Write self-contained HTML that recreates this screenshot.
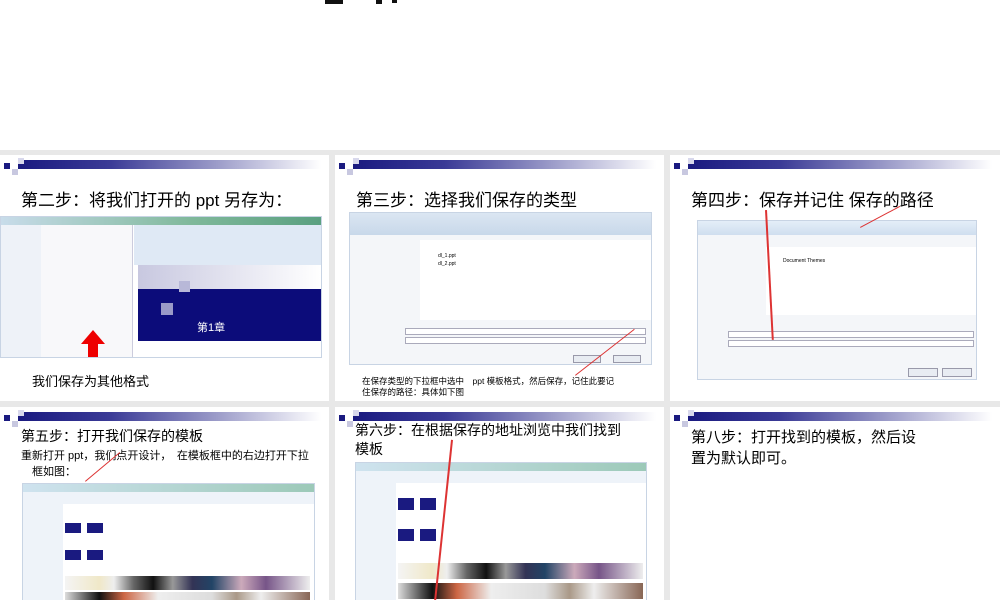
<!DOCTYPE html>
<html><head><meta charset="utf-8"><style>
*{margin:0;padding:0;box-sizing:border-box}
body{width:1000px;height:600px;overflow:hidden;background:#fff;position:relative;font-family:"Liberation Sans","Noto Sans CJK SC",sans-serif;color:#000}
.grid{position:absolute;left:0;top:150px;width:1000px;height:450px;background:#e8e8e8}
.p{position:absolute;background:#fff;overflow:hidden}
.bar{position:absolute;left:18px;top:5px;right:8px;height:9px;background:linear-gradient(90deg,#1a1a80,#3a3a96 30%,#9a9ac8 65%,#fff)}
.sq{position:absolute;width:6px;height:6px}
.t{position:absolute;font-size:17px;white-space:nowrap}
.s{position:absolute;font-size:10px;white-space:nowrap}
.shot{position:absolute;background:#fff;border:1px solid #c8d4e4;overflow:hidden}
.line{position:absolute;background:#d33;transform-origin:0 0;height:2px}
</style></head><body>
<div style="position:absolute;left:325px;top:0;width:18px;height:4px;background:#111"></div>
<div style="position:absolute;left:376px;top:0;width:6px;height:4px;background:#111"></div>
<div style="position:absolute;left:392px;top:0;width:5px;height:3px;background:#111"></div>
<div class="grid">
<!-- panel 1 -->
<div class="p" style="left:0;top:5px;width:329px;height:246px">
<div class="bar"></div><div class="sq" style="left:4px;top:8px;background:#1a1a80"></div><div class="sq" style="left:12px;top:14px;background:#c8c8e0"></div><div class="sq" style="left:18px;top:3px;background:#d8d8ec"></div>
<div class="t" style="left:21px;top:31px">第二步：将我们打开的 ppt 另存为：</div>
<div class="shot" style="left:0;top:61px;width:322px;height:142px">
<div style="position:absolute;left:0;top:0;right:0;height:8px;background:linear-gradient(90deg,#c8dcea,#7fb89a 60%,#5aa080)"></div>
<div style="position:absolute;left:0;top:8px;width:40px;bottom:0;background:#eef2f8"></div>
<div style="position:absolute;left:40px;top:8px;width:92px;bottom:0;background:#f8f8fa;border-right:1px solid #ccd"></div>
<div style="position:absolute;left:133px;top:8px;right:0;height:40px;background:#dfe9f5"></div>
<div style="position:absolute;left:137px;top:72px;right:0;height:52px;background:#0c0c7a"></div>
<div style="position:absolute;left:137px;top:48px;right:0;height:24px;background:linear-gradient(90deg,#c8c8e0,#fff)"></div>
<div style="position:absolute;left:137px;top:89px;width:12px;height:12px;background:#0c0c7a"></div>
<div style="position:absolute;left:178px;top:64px;width:11px;height:11px;background:#b8b8d8"></div>
<div style="position:absolute;left:160px;top:86px;width:12px;height:12px;background:#9a9ac8"></div>
<div style="position:absolute;left:196px;top:102px;color:#fff;font-size:11px">第1章</div>
<div style="position:absolute;left:80px;top:113px;width:0;height:0;border-left:12px solid transparent;border-right:12px solid transparent;border-bottom:14px solid #e00"></div>
<div style="position:absolute;left:87px;top:126px;width:10px;height:16px;background:#e00"></div>
</div>
<div class="s" style="left:32px;top:216px;font-size:13px">我们保存为其他格式</div>
</div>
<!-- panel 2 -->
<div class="p" style="left:335px;top:5px;width:329px;height:246px">
<div class="bar"></div><div class="sq" style="left:4px;top:8px;background:#1a1a80"></div><div class="sq" style="left:12px;top:14px;background:#c8c8e0"></div><div class="sq" style="left:18px;top:3px;background:#d8d8ec"></div>
<div class="t" style="left:21px;top:31px">第三步：选择我们保存的类型</div>
<div class="shot" style="left:14px;top:57px;width:303px;height:153px;background:#f4f6f9">
<div style="position:absolute;left:0;top:0;right:0;height:22px;background:linear-gradient(#dbe6f2,#c8d8ea)"></div>
<div style="position:absolute;left:70px;top:27px;right:0;height:80px;background:#fff"></div>
<div class="s" style="left:88px;top:40px;font-size:5px">dl_1.ppt</div><div class="s" style="left:88px;top:48px;font-size:5px">dl_2.ppt</div>
<div style="position:absolute;left:55px;top:115px;right:5px;height:7px;background:#fff;border:1px solid #aab"></div>
<div style="position:absolute;left:55px;top:124px;right:5px;height:7px;background:#fff;border:1px solid #aab"></div>
<div style="position:absolute;right:50px;top:142px;width:28px;height:8px;background:#e8ecf2;border:1px solid #99a"></div>
<div style="position:absolute;right:10px;top:142px;width:28px;height:8px;background:#e8ecf2;border:1px solid #99a"></div>
</div>
<div class="line" style="left:240px;top:220px;width:75px;transform:rotate(-38deg);height:1px"></div>
<div class="s" style="left:27px;top:221px;font-size:8.5px;line-height:11px">在保存类型的下拉框中选中　ppt 模板格式，然后保存，记住此要记<br>住保存的路径：具体如下图</div>
</div>
<!-- panel 3 -->
<div class="p" style="left:670px;top:5px;width:330px;height:246px">
<div class="bar"></div><div class="sq" style="left:4px;top:8px;background:#1a1a80"></div><div class="sq" style="left:12px;top:14px;background:#c8c8e0"></div><div class="sq" style="left:18px;top:3px;background:#d8d8ec"></div>
<div class="t" style="left:21px;top:31px">第四步：保存并记住 保存的路径</div>
<div class="shot" style="left:27px;top:65px;width:280px;height:160px;background:#f4f6f9">
<div style="position:absolute;left:0;top:0;right:0;height:14px;background:linear-gradient(#e4eef8,#cfdeef)"></div>
<div style="position:absolute;left:68px;top:26px;right:0;height:68px;background:#fff"></div>
<div class="s" style="left:85px;top:37px;font-size:5px">Document Themes</div>
<div style="position:absolute;left:30px;top:110px;right:2px;height:7px;background:#fff;border:1px solid #aab"></div>
<div style="position:absolute;left:30px;top:119px;right:2px;height:7px;background:#fff;border:1px solid #aab"></div>
<div style="position:absolute;right:38px;top:147px;width:30px;height:9px;background:#e8ecf2;border:1px solid #99a"></div>
<div style="position:absolute;right:4px;top:147px;width:30px;height:9px;background:#e8ecf2;border:1px solid #99a"></div>
</div>
<div class="line" style="left:97px;top:55px;width:130px;transform:rotate(87deg)"></div>
<div class="line" style="left:190px;top:72px;width:45px;transform:rotate(-28deg);height:1px"></div>
</div>
<!-- panel 4 -->
<div class="p" style="left:0;top:257px;width:329px;height:193px">
<div class="bar"></div><div class="sq" style="left:4px;top:8px;background:#1a1a80"></div><div class="sq" style="left:12px;top:14px;background:#c8c8e0"></div><div class="sq" style="left:18px;top:3px;background:#d8d8ec"></div>
<div class="t" style="left:21px;top:19px;font-size:14px">第五步：打开我们保存的模板</div>
<div class="s" style="left:21px;top:41px;font-size:11px;line-height:16px">重新打开 ppt，我们点开设计，　在模板框中的右边打开下拉<br>　框如图：</div>
<div class="shot" style="left:22px;top:76px;width:293px;height:120px;background:#eef3f9">
<div style="position:absolute;left:0;top:0;right:0;height:8px;background:linear-gradient(90deg,#cfe3ef,#9cc9b8)"></div>
<div style="position:absolute;left:40px;top:20px;right:0;bottom:0;background:#fff"></div>
<div style="position:absolute;left:42px;top:39px;width:16px;height:10px;background:#1a1a80"></div>
<div style="position:absolute;left:64px;top:39px;width:16px;height:10px;background:#1a1a80"></div>
<div style="position:absolute;left:42px;top:66px;width:16px;height:10px;background:#1a1a80"></div>
<div style="position:absolute;left:64px;top:66px;width:16px;height:10px;background:#1a1a80"></div>
<div style="position:absolute;left:42px;top:92px;width:245px;height:14px;background:linear-gradient(90deg,#f4f4f4,#f0e8c8 14%,#eee 20%,#666 28%,#111 36%,#999 44%,#335 52%,#246 60%,#cab 72%,#758 82%,#eee)"></div>
<div style="position:absolute;left:42px;top:108px;width:245px;height:12px;background:linear-gradient(90deg,#ddd,#111 14%,#c64 24%,#eee 38%,#ddd 60%,#a98 70%,#eee 80%,#865)"></div>
</div>
<div class="line" style="left:85px;top:74px;width:45px;transform:rotate(-40deg);height:1px"></div>
</div>
<!-- panel 5 -->
<div class="p" style="left:335px;top:257px;width:329px;height:193px">
<div class="bar"></div><div class="sq" style="left:4px;top:8px;background:#1a1a80"></div><div class="sq" style="left:12px;top:14px;background:#c8c8e0"></div><div class="sq" style="left:18px;top:3px;background:#d8d8ec"></div>
<div class="t" style="left:20px;top:14px;font-size:14px;line-height:19px">第六步：在根据保存的地址浏览中我们找到<br>模板</div>
<div class="shot" style="left:20px;top:55px;width:292px;height:140px;background:#eef3f9">
<div style="position:absolute;left:0;top:0;right:0;height:8px;background:linear-gradient(90deg,#cfe3ef,#9cc9b8)"></div>
<div style="position:absolute;left:40px;top:20px;right:0;bottom:0;background:#fff"></div>
<div style="position:absolute;left:42px;top:35px;width:16px;height:12px;background:#1a1a80"></div>
<div style="position:absolute;left:64px;top:35px;width:16px;height:12px;background:#1a1a80"></div>
<div style="position:absolute;left:42px;top:66px;width:16px;height:12px;background:#1a1a80"></div>
<div style="position:absolute;left:64px;top:66px;width:16px;height:12px;background:#1a1a80"></div>
<div style="position:absolute;left:42px;top:100px;width:245px;height:16px;background:linear-gradient(90deg,#f4f4f4,#f0e8c8 14%,#eee 20%,#666 28%,#111 36%,#999 44%,#335 52%,#246 60%,#cab 72%,#758 82%,#eee)"></div>
<div style="position:absolute;left:42px;top:120px;width:245px;height:16px;background:linear-gradient(90deg,#ddd,#111 14%,#c64 24%,#eee 38%,#ddd 60%,#a98 70%,#eee 80%,#865)"></div>
</div>
<div class="line" style="left:118px;top:33px;width:162px;transform:rotate(96deg)"></div>
</div>
<!-- panel 6 -->
<div class="p" style="left:670px;top:257px;width:330px;height:193px">
<div class="bar"></div><div class="sq" style="left:4px;top:8px;background:#1a1a80"></div><div class="sq" style="left:12px;top:14px;background:#c8c8e0"></div><div class="sq" style="left:18px;top:3px;background:#d8d8ec"></div>
<div class="t" style="left:21px;top:20px;font-size:15px;line-height:21px">第八步：打开找到的模板，然后设<br>置为默认即可。</div>
</div>
</div>
</body></html>
